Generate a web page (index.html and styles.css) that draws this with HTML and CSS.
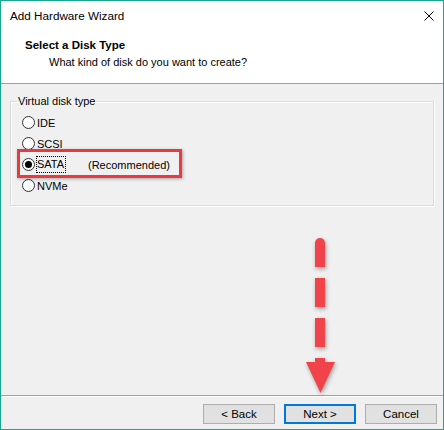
FILE: index.html
```html
<!DOCTYPE html>
<html>
<head>
<meta charset="utf-8">
<link rel="stylesheet" href="styles.css">
</head>
<body>
<div class="window">
  <div class="header">
    <div class="titlebar">
      <span class="title">Add Hardware Wizard</span>
      <svg class="close" width="10" height="10" viewBox="0 0 10 10"><path d="M0.5 0.5 L9.5 9.5 M9.5 0.5 L0.5 9.5" stroke="#000" stroke-width="1" fill="none"/></svg>
    </div>
    <div class="heading">Select a Disk Type</div>
    <div class="subheading">What kind of disk do you want to create?</div>
  </div>
  <div class="content">
    <fieldset class="group">
      <legend>Virtual disk type</legend>
      <div class="options">
        <div class="option"><span class="radio"></span><span class="label">IDE</span></div>
        <div class="option"><span class="radio"></span><span class="label">SCSI</span></div>
        <div class="option"><span class="radio checked"></span><span class="label-col"><span class="label focus">SATA</span></span><span class="rec">(Recommended)</span></div>
        <div class="option"><span class="radio"></span><span class="label">NVMe</span></div>
      </div>
    </fieldset>
  </div>
  <div class="footer">
    <button class="btn">&lt; Back</button>
    <button class="btn primary">Next &gt;</button>
    <button class="btn">Cancel</button>
  </div>
  <div class="highlight"></div>
  <svg class="arrow" width="40" height="170" viewBox="0 0 40 170">
    <g fill="#f0434a">
      <path d="M15 13 A5 5 0 0 1 25 13 V37 H15 Z"/>
      <rect x="15" y="48" width="10" height="29"/>
      <rect x="15" y="88" width="10" height="29"/>
      <rect x="15" y="128" width="10" height="8"/>
      <path d="M6 132 L35 132 L20.5 163 Z"/>
    </g>
  </svg>
</div>
</body>
</html>
```
FILE: styles.css
```css
html, body {
  margin: 0;
  padding: 0;
}
body {
  font-family: "Liberation Sans", Arial, sans-serif;
  font-size: 11px;
  color: #000;
  background: #fff;
}
.window {
  position: relative;
  width: 444px;
  height: 430px;
  box-sizing: border-box;
  border: 1px solid #17a88d;
  background: #f0f0f0;
  display: flex;
  flex-direction: column;
}
.header {
  background: #fff;
  height: 82px;
  border-bottom: 1px solid #a0a0a0;
  flex: none;
}
.titlebar {
  height: 30px;
  display: flex;
  align-items: center;
  justify-content: space-between;
  padding: 0 9px 0 9px;
}
.title {
  line-height: 30px;
  font-size: 11.7px;
}
.close {
  display: block;
  margin-top: -1px;
}
.heading {
  font-weight: bold;
  font-size: 11.5px;
  line-height: 14px;
  margin-top: 7px;
  padding-left: 24px;
}
.subheading {
  line-height: 14px;
  margin-top: 3px;
  padding-left: 48px;
}
.content {
  flex: 1;
}
.group {
  margin: 10px 9px 0 9px;
  padding: 0 0 9px 6px;
  border: 1px solid #dcdcdc;
  box-shadow: 1px 1px 0 #fff, inset 1px 1px 0 #fff;
}
.group legend {
  padding: 0 1px;
  line-height: 14px;
}
.options {
  padding: 4px 0 0 5px;
}
.option {
  display: flex;
  align-items: center;
  height: 21px;
}
.radio {
  width: 13px;
  height: 13px;
  box-sizing: border-box;
  border: 1px solid #333;
  border-radius: 50%;
  background: #fff;
  position: relative;
  flex: none;
}
.radio.checked::after {
  content: "";
  position: absolute;
  left: 2px;
  top: 2px;
  width: 7px;
  height: 7px;
  border-radius: 50%;
  background: #000;
}
.label {
  margin-left: 2px;
  line-height: 14px;
}
.label-col {
  width: 53px;
  display: flex;
}
.focus {
  outline: 1px dotted #000;
  outline-offset: 0;
  padding: 1px 1px 1px 0;
  line-height: 13px;
}
.rec {
  line-height: 14px;
}
.footer {
  flex: none;
  height: 34px;
  border-top: 1px solid #a0a0a0;
  box-shadow: inset 0 1px 0 #fff;
  display: flex;
  justify-content: flex-end;
  align-items: flex-start;
  gap: 9px;
  padding: 8px 6px 0 0;
  box-sizing: border-box;
}
.btn {
  width: 72px;
  height: 20px;
  box-sizing: border-box;
  border: 1px solid #adadad;
  background: #e1e1e1;
  font-family: "Liberation Sans", Arial, sans-serif;
  font-size: 11.5px;
  color: #000;
  padding: 0;
  margin: 0;
  line-height: 18px;
}
.btn.primary {
  border: 2px solid #0078d7;
  line-height: 16px;
}
.highlight {
  position: absolute;
  left: 16px;
  top: 148px;
  width: 165px;
  height: 29px;
  box-sizing: border-box;
  border: 3px solid #e83a40;
  box-shadow: 1px 1px 3px rgba(0,0,0,0.3);
}
.arrow {
  position: absolute;
  left: 299px;
  top: 229px;
  filter: drop-shadow(1px 2px 2px rgba(0,0,0,0.35));
}
```
